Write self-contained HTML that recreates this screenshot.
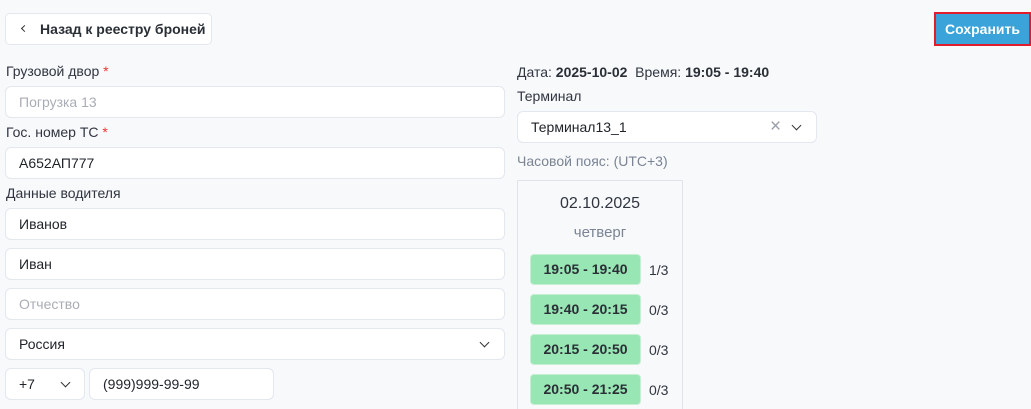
<!DOCTYPE html>
<html><head><meta charset="utf-8"><style>
*{box-sizing:border-box;margin:0;padding:0}
html,body{width:1031px;height:409px;overflow:hidden}
body{background:#f8f9fb;font-family:"Liberation Sans",sans-serif;font-size:14px;color:#1f2329;position:relative}
.a{position:absolute}
.in{position:absolute;background:#fff;border:1px solid #e3e7ee;border-radius:6px;height:32px;padding-left:13px;line-height:30px;font-size:14px}
.lbl{position:absolute;font-size:14px;color:#303540}
.req{color:#e53935}
.ph{color:#a9adb5}
.slot{position:absolute;left:530px;width:111px;height:31px;background:#98e6b3;border:1px solid #c5eed3;border-radius:4px;text-align:center;line-height:29px;font-weight:bold;font-size:14px;color:#2a2f36}
.cnt{position:absolute;left:649px;font-size:14px;color:#303540}
.chev{position:absolute;width:7px;height:7px;border-right:1.3px solid #333;border-bottom:1.3px solid #333;transform:rotate(45deg)}
</style></head><body>
<div class="a" style="left:5px;top:13px;width:207px;height:32px;background:#fff;border:1px solid #e3e7ee;border-radius:5px;font-weight:bold;line-height:30px;padding-left:34px;color:#2a2f36">Назад к реестру броней</div>
<div class="a" style="left:22px;top:26px;width:5px;height:5px;border-left:1.5px solid #333;border-bottom:1.5px solid #333;transform:rotate(45deg)"></div>
<div class="a" style="left:934px;top:12px;width:97px;height:34px;border:2px solid #e21c2a;background:#3aa3da;color:#fff;font-weight:bold;text-align:center;line-height:30px">Сохранить</div>

<div class="lbl" style="left:6px;top:63px">Грузовой двор <span class="req">*</span></div>
<div class="in ph" style="left:5px;top:86px;width:500px">Погрузка 13</div>
<div class="lbl" style="left:6px;top:124px">Гос. номер ТС <span class="req">*</span></div>
<div class="in" style="left:5px;top:147px;width:500px">А652АП777</div>
<div class="lbl" style="left:6px;top:185px">Данные водителя</div>
<div class="in" style="left:5px;top:208px;width:500px">Иванов</div>
<div class="in" style="left:5px;top:248px;width:500px">Иван</div>
<div class="in ph" style="left:5px;top:288px;width:500px">Отчество</div>
<div class="in" style="left:5px;top:328px;width:500px">Россия</div>
<div class="chev" style="left:481px;top:339px"></div>
<div class="in" style="left:5px;top:368px;width:80px">+7</div>
<div class="chev" style="left:62px;top:379px"></div>
<div class="in" style="left:89px;top:368px;width:185px">(999)999-99-99</div>

<div class="lbl" style="left:517px;top:64px">Дата: <b style="color:#2a2f36">2025-10-02</b>&nbsp; Время: <b style="color:#2a2f36">19:05 - 19:40</b></div>
<div class="lbl" style="left:517px;top:88px">Терминал</div>
<div class="in" style="left:517px;top:111px;width:300px">Терминал13_1</div>
<div class="a" style="left:770px;top:116px;color:#9aa0aa;font-size:19px">×</div>
<div class="chev" style="left:793px;top:122px"></div>
<div class="lbl" style="left:517px;top:153px;color:#7a8494">Часовой пояс: (UTC+3)</div>
<div class="a" style="left:517px;top:180px;width:166px;height:240px;border:1px solid #dfe3ea;background:#f8f9fb"></div>
<div class="a" style="left:517px;top:195px;width:166px;text-align:center;font-size:16px;color:#303540">02.10.2025</div>
<div class="a" style="left:517px;top:224px;width:166px;text-align:center;font-size:15px;color:#7a8494">четверг</div>
<div class="slot" style="top:254px">19:05 - 19:40</div><div class="cnt" style="top:262px">1/3</div>
<div class="slot" style="top:294px">19:40 - 20:15</div><div class="cnt" style="top:302px">0/3</div>
<div class="slot" style="top:334px">20:15 - 20:50</div><div class="cnt" style="top:342px">0/3</div>
<div class="slot" style="top:374px">20:50 - 21:25</div><div class="cnt" style="top:382px">0/3</div>
</body></html>
